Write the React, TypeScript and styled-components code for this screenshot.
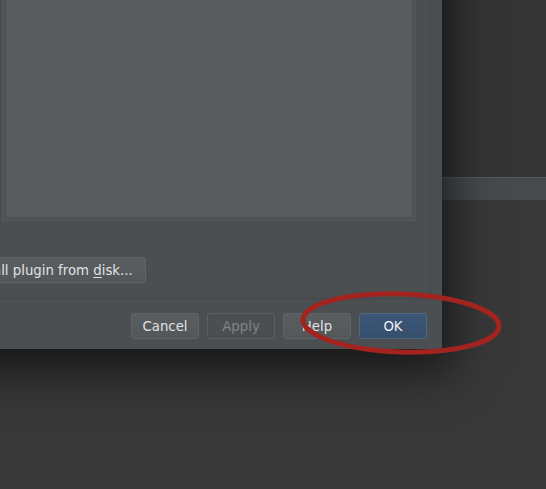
import React from "react";
import styled, { createGlobalStyle } from "styled-components";

const GlobalStyle = createGlobalStyle`
  html, body {
    margin: 0;
    padding: 0;
    width: 546px;
    height: 489px;
    overflow: hidden;
    background: #383838;
    font-family: "DejaVu Sans", "Liberation Sans", sans-serif;
  }
`;

const Desktop = styled.div`
  position: relative;
  width: 546px;
  height: 489px;
  overflow: hidden;
  background: #383838;
  display: flex;
  flex-direction: column;
`;

const IdeTop = styled.div`
  height: 177px;
  background: #353535;
`;

const IdeBar = styled.div`
  height: 22px;
  background: #464a4d;
  border-top: 1px solid #56595b;
`;

const IdeRest = styled.div`
  flex: 1;
  background: #383838;
`;

const Dialog = styled.div`
  position: absolute;
  left: -300px;
  top: -100px;
  width: 742px;
  background: #4b4f52;
  box-shadow: 0 12px 40px 12px rgba(0, 0, 0, 0.55), 0 0 1px #2a2a2a;
  display: flex;
  flex-direction: column;
`;

const Body = styled.div`
  margin-right: 11px;
  padding: 10px 12px 15px 10px;
  border-right: 1px solid #43464a;
  border-bottom: 1px solid #43464a;
  display: flex;
  flex-direction: column;
`;

const Split = styled.div`
  display: flex;
  gap: 10px;
`;

const ListPane = styled.div`
  flex: 1;
  background: #505457;
`;

const DetailsPane = styled.div`
  width: 418px;
  height: 313px;
  box-sizing: border-box;
  background: #575b5c;
  border: 1px solid #484a4c;
  box-shadow: inset 0 0 0 4px #505456, inset 0 0 0 5px #4d5052;
`;

const ActionRow = styled.div`
  margin-top: 34px;
  display: flex;
  gap: 8px;
  padding-left: 68px;
`;

const Footer = styled.div`
  display: flex;
  justify-content: flex-end;
  gap: 8px;
  padding: 14px 15px 10px 0;
`;

type Variant = "normal" | "disabled" | "default";

const Button = styled.button<{ $variant?: Variant; $w?: number }>`
  height: 26px;
  ${(p) => (p.$w ? `width: ${p.$w}px;` : "padding: 0 12px;")}
  box-sizing: border-box;
  border-radius: 3px;
  font-family: "DejaVu Sans", "Liberation Sans", sans-serif;
  font-size: 13.3px;
  white-space: nowrap;
  text-align: center;
  border: 1px solid
    ${(p) =>
      p.$variant === "default"
        ? "#4f6783"
        : p.$variant === "disabled"
        ? "#5c6063"
        : "#606466"};
  background: ${(p) =>
    p.$variant === "default"
      ? "linear-gradient(#3d5878, #354e6b)"
      : p.$variant === "disabled"
      ? "#4b4f52"
      : "linear-gradient(#5a5e60, #53575a)"};
  color: ${(p) =>
    p.$variant === "default"
      ? "#eef1f5"
      : p.$variant === "disabled"
      ? "#828587"
      : "#e0e2e4"};
`;

const Mnemonic = styled.span`
  text-decoration: underline;
  text-underline-offset: 2px;
`;

const Annotation = styled.svg`
  position: absolute;
  left: 296px;
  top: 287px;
  pointer-events: none;
`;

export default function App() {
  return (
    <>
      <GlobalStyle />
      <Desktop>
        <IdeTop />
        <IdeBar />
        <IdeRest />
        <Dialog>
          <Body>
            <Split>
              <ListPane />
              <DetailsPane />
            </Split>
            <ActionRow>
              <Button>Browse repositories...</Button>
              <Button>
                Install plugin from <Mnemonic>d</Mnemonic>isk...
              </Button>
            </ActionRow>
          </Body>
          <Footer>
            <Button $w={68}>Cancel</Button>
            <Button $w={68} $variant="disabled">
              Apply
            </Button>
            <Button $w={68}>Help</Button>
            <Button $w={68} $variant="default">
              OK
            </Button>
          </Footer>
        </Dialog>
        <Annotation width="212" height="74" viewBox="0 0 212 74">
          <ellipse
            cx="105"
            cy="36"
            rx="98"
            ry="29"
            fill="none"
            stroke="#a3241f"
            strokeWidth="5"
            transform="rotate(2 105 36)"
          />
        </Annotation>
      </Desktop>
    </>
  );
}
